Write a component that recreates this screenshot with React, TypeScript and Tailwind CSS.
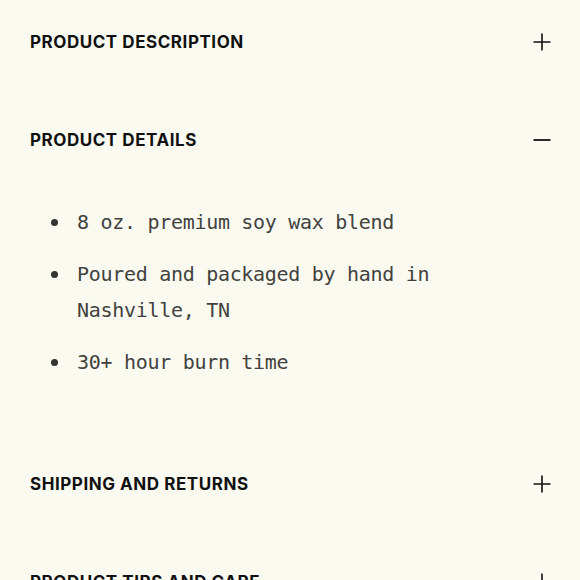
import React, { useState } from "react";

type Section = {
  title: string;
  items?: string[];
};

const sections: Section[] = [
  { title: "PRODUCT DESCRIPTION" },
  {
    title: "PRODUCT DETAILS",
    items: [
      "8 oz. premium soy wax blend",
      "Poured and packaged by hand in Nashville, TN",
      "30+ hour burn time",
    ],
  },
  { title: "SHIPPING AND RETURNS" },
  { title: "PRODUCT TIPS AND CARE" },
];

const PlusIcon: React.FC = () => (
  <svg width="18" height="18" viewBox="0 0 18 18" fill="none" stroke="#111111" strokeWidth={1.6}>
    <path d="M9 0.5v17M0.5 9h17" />
  </svg>
);

const MinusIcon: React.FC = () => (
  <svg width="18" height="18" viewBox="0 0 18 18" fill="none" stroke="#111111" strokeWidth={1.8}>
    <path d="M0.5 9h17" />
  </svg>
);

export default function App() {
  const [open, setOpen] = useState<number | null>(1);

  return (
    <div className="h-[580px] w-[580px] overflow-hidden bg-[#fbfaf1]">
      <div className="mt-[-7px] pl-[30px] pr-[29px]">
        {sections.map((section, i) => {
          const isOpen = open === i;
          return (
            <div key={section.title}>
              <button
                onClick={() => setOpen(isOpen ? null : i)}
                className="flex h-[98px] w-full items-center justify-between text-left"
              >
                <span className="font-['Inter',sans-serif] text-[17px] font-bold leading-[18px] tracking-[0.55px] text-[#111111]">
                  {section.title}
                </span>
                {isOpen ? <MinusIcon /> : <PlusIcon />}
              </button>
              {isOpen && section.items && (
                <ul className="flex flex-col gap-4 pb-[55px] pt-[15px]">
                  {section.items.map((item) => (
                    <li key={item} className="flex">
                      <span className="flex h-9 w-[47px] shrink-0 items-center pl-[21px]">
                        <span className="h-[7px] w-[7px] rounded-full bg-[#333333]" />
                      </span>
                      <span className="max-w-[390px] font-['DejaVu_Sans_Mono',monospace] text-[20px] leading-9 tracking-[-0.3px] text-[#42423e]">
                        {item}
                      </span>
                    </li>
                  ))}
                </ul>
              )}
            </div>
          );
        })}
      </div>
    </div>
  );
}
